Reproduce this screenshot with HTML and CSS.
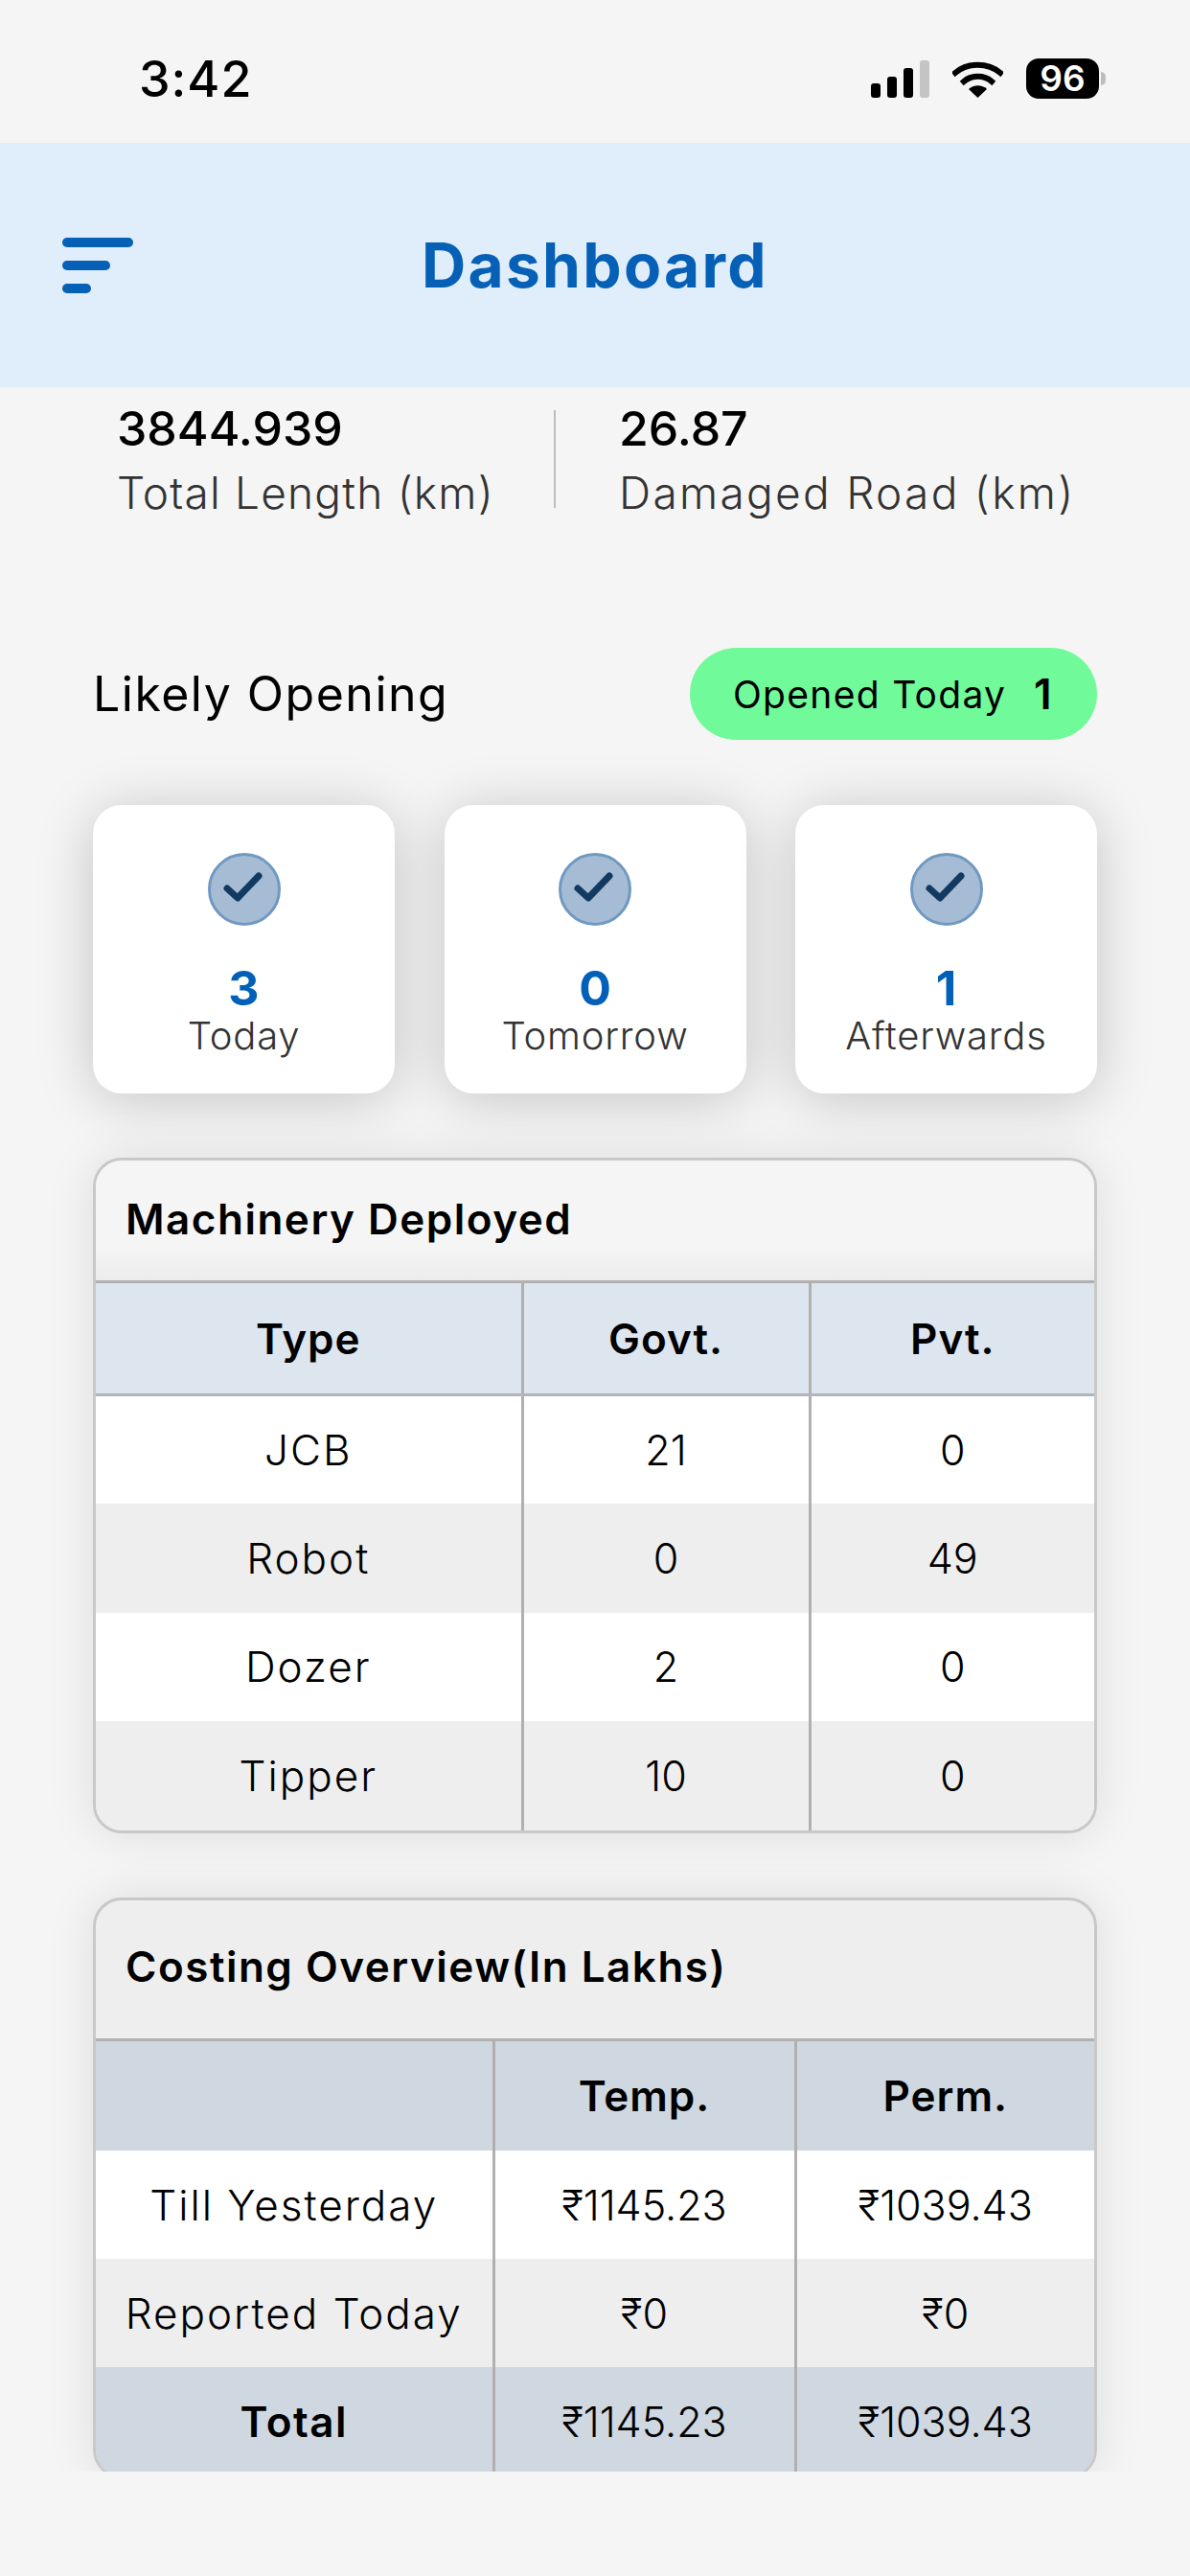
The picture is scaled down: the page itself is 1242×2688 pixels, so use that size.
FILE: index.html
```html
<!DOCTYPE html>
<html lang="en">
<head>
  <meta charset="UTF-8">
  <meta name="viewport" content="width=device-width, initial-scale=1">
  <title>Dashboard</title>
  <link rel="stylesheet" href="styles.css">
</head>
<body>
<div class="status-bar">
  <span class="clock">3:42</span>
  <div class="status-icons">
    <svg class="signal" width="61" height="39" viewBox="0 0 61 39">
      <rect x="0" y="24" width="10" height="15" rx="3" fill="#000"/>
      <rect x="17" y="17" width="10" height="22" rx="3" fill="#000"/>
      <rect x="34" y="8" width="10" height="31" rx="3" fill="#000"/>
      <rect x="51" y="0" width="10" height="39" rx="3" fill="#c4c4c4"/>
    </svg>
    <svg class="wifi" width="53" height="39" viewBox="0 0 53 39">
      <path d="M3 13 C16 2 37 2 50 13" fill="none" stroke="#000" stroke-width="6" stroke-linecap="square"/>
      <path d="M12 22 C20 15 33 15 41 22" fill="none" stroke="#000" stroke-width="6" stroke-linecap="square"/>
      <path d="M17 30 C22 25 31 25 36 30 L26.5 39 Z" fill="#000"/>
    </svg>
    <div class="battery"><span class="battery-level">96</span><span class="battery-nub"></span></div>
  </div>
</div>

<header class="top-bar">
  <svg class="menu-icon" width="74" height="58" viewBox="0 0 74 58">
    <rect x="0" y="0" width="74" height="10" rx="5" fill="#0560b6"/>
    <rect x="0" y="24" width="50" height="10" rx="5" fill="#0560b6"/>
    <rect x="0" y="48" width="30" height="10" rx="5" fill="#0560b6"/>
  </svg>
  <h1>Dashboard</h1>
</header>

<main class="content">
  <section class="stats">
    <div class="stat stat-first">
      <div class="stat-value">3844.939</div>
      <div class="stat-label">Total Length (km)</div>
    </div>
    <div class="stat stat-second">
      <div class="stat-value">26.87</div>
      <div class="stat-label">Damaged Road (km)</div>
    </div>
  </section>

  <section class="opening-head">
    <h2>Likely Opening</h2>
    <div class="pill"><span>Opened Today</span><b>1</b></div>
  </section>

  <section class="cards">
    <div class="card">
      <svg class="check" width="76" height="76" viewBox="0 0 76 76">
        <circle cx="38" cy="38" r="36.5" fill="#a5bcd4" stroke="#7099c2" stroke-width="3"/>
        <path d="M20 37 L31 47 L53 24" fill="none" stroke="#123a60" stroke-width="7" stroke-linecap="round" stroke-linejoin="round"/>
      </svg>
      <div class="card-num">3</div>
      <div class="card-label">Today</div>
    </div>
    <div class="card">
      <svg class="check" width="76" height="76" viewBox="0 0 76 76">
        <circle cx="38" cy="38" r="36.5" fill="#a5bcd4" stroke="#7099c2" stroke-width="3"/>
        <path d="M20 37 L31 47 L53 24" fill="none" stroke="#123a60" stroke-width="7" stroke-linecap="round" stroke-linejoin="round"/>
      </svg>
      <div class="card-num">0</div>
      <div class="card-label">Tomorrow</div>
    </div>
    <div class="card">
      <svg class="check" width="76" height="76" viewBox="0 0 76 76">
        <circle cx="38" cy="38" r="36.5" fill="#a5bcd4" stroke="#7099c2" stroke-width="3"/>
        <path d="M20 37 L31 47 L53 24" fill="none" stroke="#123a60" stroke-width="7" stroke-linecap="round" stroke-linejoin="round"/>
      </svg>
      <div class="card-num">1</div>
      <div class="card-label">Afterwards</div>
    </div>
  </section>

  <section class="panel machinery">
    <h3>Machinery Deployed</h3>
    <table>
      <thead>
      <tr>
        <th class="col-a">Type</th>
        <th class="col-b">Govt.</th>
        <th>Pvt.</th>
      </tr>
      </thead>
      <tbody>
      <tr><td class="name">JCB</td><td>21</td><td>0</td></tr>
      <tr><td class="name">Robot</td><td>0</td><td>49</td></tr>
      <tr><td class="name">Dozer</td><td>2</td><td>0</td></tr>
      <tr><td class="name">Tipper</td><td>10</td><td>0</td></tr>
      </tbody>
    </table>
  </section>

  <section class="panel costing">
    <h3>Costing Overview(In Lakhs)</h3>
    <table>
      <thead>
      <tr>
        <th class="col-a"></th>
        <th class="col-b">Temp.</th>
        <th>Perm.</th>
      </tr>
      </thead>
      <tbody>
      <tr><td class="name">Till Yesterday</td><td>₹1145.23</td><td>₹1039.43</td></tr>
      <tr><td class="name">Reported Today</td><td>₹0</td><td>₹0</td></tr>
      <tr class="total"><td class="name">Total</td><td>₹1145.23</td><td>₹1039.43</td></tr>
      </tbody>
    </table>
  </section>
</main>
</body>
</html>
```

FILE: styles.css
```css
* { box-sizing: border-box; }
html, body {
  margin: 0;
  height: 2688px;
  overflow: hidden;
}
body {
  font-family: Inter, "Noto Sans", sans-serif;
  background-color: #f5f5f5;
  color: #000;
}

/* status bar */
.status-bar {
  height: 149px;
  display: flex;
  justify-content: space-between;
  align-items: flex-start;
  padding: 52px 95px 0 145px;
}
.clock {
  font-size: 52px;
  line-height: 62px;
  font-weight: 500;
  letter-spacing: 1px;
}
.status-icons {
  display: flex;
  align-items: center;
  padding: 9px 0 0;
}
.signal { margin-right: 24px; }
.wifi { margin-right: 24px; }
.battery {
  position: relative;
  width: 76px;
  height: 42px;
  background-color: #000;
  border-radius: 13px;
  color: #fff;
  display: flex;
  align-items: center;
  justify-content: center;
}
.battery-level {
  font-size: 37px;
  line-height: 42px;
  font-weight: 600;
}
.battery-nub {
  position: absolute;
  left: 78px;
  top: 14px;
  width: 5px;
  height: 14px;
  background-color: #bdbdbd;
  border-radius: 0 6px 6px 0;
}

/* header */
.top-bar {
  height: 255px;
  background-color: #e0edfb;
  position: relative;
  display: flex;
  align-items: center;
  justify-content: center;
}
.top-bar h1 {
  margin: 0;
  font-size: 64px;
  line-height: 72px;
  font-weight: 700;
  color: #0560b6;
  letter-spacing: 2.3px;
}
.menu-icon {
  position: absolute;
  left: 65px;
  top: 99px;
}

.content {
  height: 2175px;
  overflow: hidden;
}

/* totals under the header */
.stats {
  display: flex;
  padding: 13px 0 0 122px;
  height: 271px;
}
.stat-first {
  width: 458px;
  position: relative;
}
.stat-first::after {
  content: "";
  position: absolute;
  right: 0;
  top: 11px;
  width: 2px;
  height: 102px;
  background-color: #bdbdbd;
}
.stat-second { padding-left: 66px; }
.stat-value {
  font-size: 50px;
  line-height: 60px;
  font-weight: 500;
}
.stat-label {
  font-size: 46px;
  line-height: 60px;
  color: #333;
  margin-top: 7px;
  font-weight: 300;
  letter-spacing: 1.2px;
}
.stat-second .stat-label { letter-spacing: 2.3px; }

.opening-head {
  display: flex;
  justify-content: space-between;
  align-items: center;
  margin: 1px 97px 0;
  height: 96px;
}
.opening-head h2 {
  margin: 0;
  font-size: 50px;
  font-weight: 400;
  letter-spacing: 1.5px;
}
.pill {
  width: 425px;
  height: 96px;
  border-radius: 48px;
  background-color: #70fa99;
  display: flex;
  align-items: center;
  justify-content: space-between;
  padding: 0 46px 0 45px;
  font-size: 39px;
  letter-spacing: 1.3px;
}
.pill b {
  font-size: 44px;
  font-weight: 600;
}

/* the three small cards */
.cards {
  display: flex;
  justify-content: space-between;
  margin: 68px 97px 0;
}
.card {
  width: 315px;
  height: 301px;
  background-color: #fff;
  border-radius: 30px;
  box-shadow: 0 6px 60px rgba(0,0,0,0.2);
  display: flex;
  flex-direction: column;
  align-items: center;
  padding-top: 50px;
}
.card-num {
  margin-top: 40px;
  font-size: 50px;
  line-height: 50px;
  font-weight: 700;
  color: #0260b8;
}
.card-label {
  font-size: 40px;
  line-height: 46px;
  color: #333;
  font-weight: 300;
  letter-spacing: 0.8px;
  margin-top: 2px;
}

/* tables */
.panel {
  margin: 67px 97px 0;
  border: 3px solid #c8c8c8;
  border-radius: 30px;
  background-color: #eee;
  box-shadow: 0 0 50px rgba(0,0,0,0.1);
  overflow: hidden;
}
.panel h3 {
  margin: 0;
  padding-left: 31px;
  font-size: 44px;
  font-weight: 600;
  letter-spacing: 1.5px;
  display: flex;
  align-items: center;
}
.machinery h3 {
  height: 125px;
  padding-bottom: 4px;
  background: linear-gradient(#f5f5f5 70%, #ececec);
}
.costing { margin-top: 67px; }
.costing h3 {
  height: 144px;
  padding-bottom: 6px;
}
table {
  width: 100%;
  border-collapse: collapse;
  table-layout: fixed;
}
th, td {
  padding: 0;
  text-align: center;
  border-left: 3px solid #b0b0b0;
  font-size: 43px;
  font-weight: 300;
}
th:first-child, td:first-child { border-left: 0; }
th {
  font-size: 44px;
  font-weight: 600;
  letter-spacing: 1px;
  border-top: 3px solid #b0b0b0;
}
td.name {
  font-size: 44px;
  letter-spacing: 2px;
}
tbody tr:nth-child(odd) { background-color: #fff; }
tbody tr:nth-child(even) { background-color: #eee; }

.machinery thead tr { background-color: #dde5ef; }
.machinery th {
  height: 118px;
  border-bottom: 3px solid #b0b5bb;
}
.machinery td { height: 113.6px; }
.machinery .col-a { width: 445px; }
.machinery .col-b { width: 300px; }

.costing thead tr { background-color: #cfd7e1; }
.costing th { height: 116px; }
.costing td { height: 113px; }
.costing .col-a { width: 415px; }
.costing .col-b { width: 315px; }
.costing tbody tr.total { background-color: #cfd7e1; }
.total td.name { font-weight: 600; letter-spacing: 1.5px; }
```
